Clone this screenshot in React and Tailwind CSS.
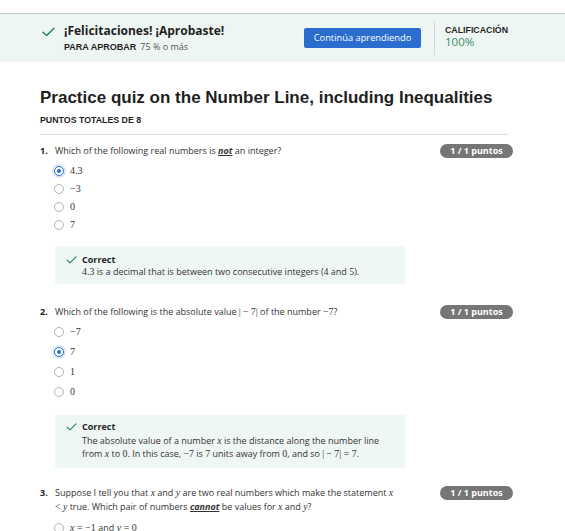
const sans = "font-['Open_Sans',sans-serif]";
const arial = "font-['Liberation_Sans',Arial,sans-serif]";
const serif = "font-['Liberation_Serif',serif]";

const Check = ({ className }) => (
  <svg width="13" height="10" viewBox="0 0 13 10" fill="none" className={className}>
    <path d="M1 5.2L4.6 8.6L12 1.2" stroke="#1f8354" strokeWidth="1.4" strokeLinecap="round" strokeLinejoin="round" />
  </svg>
);

const M = ({ children }) => <span className={`text-[1.1em] leading-none ${serif}`}>{children}</span>;
const V = ({ children }) => <i className={`text-[1.1em] leading-none ${serif}`}>{children}</i>;

const Radio = ({ checked }) =>
  checked ? (
    <span className="w-[10px] h-[10px] shrink-0 rounded-full border-[1.5px] border-[#2a6fd0] ring-2 ring-[#dbe7f7] flex items-center justify-center">
      <span className="w-[4.5px] h-[4.5px] rounded-full bg-[#2a6fd0]" />
    </span>
  ) : (
    <span className="w-[10px] h-[10px] shrink-0 rounded-full border border-[#b4b4b4] bg-white" />
  );

const Option = ({ checked, children, h }) => (
  <div className={`flex items-center pl-[14px] gap-[6px] ${h}`}>
    <Radio checked={checked} />
    <span className={`text-[10px] leading-[12px] text-[#333] ${serif}`}>{children}</span>
  </div>
);

const Question = ({ num, children, className }) => (
  <div className={`flex items-start w-[473px] ${className}`}>
    <span className={`w-[15px] shrink-0 text-[9px] leading-[14px] font-bold text-[#222] ${sans}`}>{num}.</span>
    <p className={`w-[344px] text-[9px] leading-[14px] text-[#333] ${sans}`}>{children}</p>
    <span className={`ml-auto w-[73px] h-[14px] rounded-full bg-[#767676] text-white text-center text-[9px] leading-[14px] font-bold ${sans}`}>
      1 / 1 puntos
    </span>
  </div>
);

const Feedback = ({ children, className, bodyClass }) => (
  <div className={`ml-[15px] w-[350px] bg-[#eff7f4] pl-[11px] pr-[16px] ${className}`}>
    <div className="flex items-center gap-[5px] h-[12px]">
      <Check className="w-[11px] h-[8px]" />
      <span className={`text-[9px] font-bold text-[#1f1f1f] ${sans}`}>Correct</span>
    </div>
    <p className={`pl-[16px] text-[9px] text-[#333] ${sans} ${bodyClass}`}>{children}</p>
  </div>
);

export default function App() {
  return (
    <div className="w-[565px] h-[531px] overflow-hidden bg-white">
      <div className="h-[13px]" />
      <div className="h-[49px] border-t border-[#c6c6c6] bg-[#eef6f3] flex items-center">
        <div className="w-[304px] shrink-0 pl-[42px] flex items-start">
          <Check className="mt-[3px] shrink-0" />
          <div className="ml-[9px]">
            <div className={`text-[12px] leading-[14px] font-bold text-[#1f1f1f] ${sans}`}>¡Felicitaciones! ¡Aprobaste!</div>
            <div className="mt-[1px] leading-[11px]">
              <span className={`text-[9px] font-bold text-[#1f1f1f] ${arial}`}>PARA APROBAR</span>{' '}
              <span className={`text-[9px] text-[#555] ${sans}`}>75 % o más</span>
            </div>
          </div>
        </div>
        <button className={`w-[117px] h-[20px] rounded-[2px] bg-[#2a6dcf] text-white text-[9.3px] ${sans}`}>
          Continúa aprendiendo
        </button>
        <div className="ml-[13px] w-px h-[33px] bg-[#d6d6d6]" />
        <div className="ml-[10px] -mt-[4px]">
          <div className={`text-[8.8px] leading-[10px] font-bold text-[#1f1f1f] ${arial}`}>CALIFICACIÓN</div>
          <div className={`text-[11.5px] leading-[13px] text-[#3b8d60] ${sans}`}>100%</div>
        </div>
      </div>

      <div className="pl-[40px]">
        <h1 className={`mt-[26px] text-[17px] leading-[20px] font-bold text-[#1f1f1f] ${arial}`}>
          Practice quiz on the Number Line, including Inequalities
        </h1>
        <div className={`mt-[7px] text-[8.8px] leading-[11px] font-bold text-[#1f1f1f] ${arial}`}>PUNTOS TOTALES DE 8</div>
        <div className="mt-[8px] w-[468px] h-px bg-[#dcdcdc]" />

        <Question num="1" className="mt-[9px]">
          Which of the following real numbers is{' '}
          <b className="italic underline">not</b> an integer?
        </Question>
        <div className="mt-[4px]">
          <Option checked h="h-[18px]">4.3</Option>
          <Option h="h-[18px]">−3</Option>
          <Option h="h-[18px]">0</Option>
          <Option h="h-[18px]">7</Option>
        </div>
        <Feedback className="mt-[12px] pt-[8px] pb-[6px]" bodyClass="leading-[12px]">
          <M>4.3</M> is a decimal that is between two consecutive integers (<M>4</M> and <M>5</M>).
        </Feedback>

        <Question num="2" className="mt-[21px]">
          Which of the following is the absolute value <M>|&thinsp;− 7|</M> of the number <M>−7</M>?
        </Question>
        <div className="mt-[3px]">
          <Option h="h-[20px]">−7</Option>
          <Option checked h="h-[20px]">7</Option>
          <Option h="h-[20px]">1</Option>
          <Option h="h-[20px]">0</Option>
        </div>
        <Feedback className="mt-[13px] pt-[6px] pb-[8px]" bodyClass="mt-[1px] leading-[13px]">
          The absolute value of a number <V>x</V> is the distance along the number line from <V>x</V> to <M>0</M>. In
          this case, <M>−7</M> is <M>7</M> units away from <M>0</M>, and so <M>|&thinsp;− 7| = 7</M>.
        </Feedback>

        <Question num="3" className="mt-[18px]">
          Suppose I tell you that <V>x</V> and <V>y</V> are two real numbers which make the statement <V>x</V>{' '}
          <M>&lt;</M> <V>y</V> true. Which pair of numbers <b className="italic underline">cannot</b> be values for{' '}
          <V>x</V> and <V>y</V>?
        </Question>
        <div className="mt-[4px]">
          <Option h="h-[20px]">
            <i>x</i> = −1 <span className={`text-[9px] ${sans}`}>and</span> <i>y</i> = 0
          </Option>
        </div>
      </div>
    </div>
  );
}
